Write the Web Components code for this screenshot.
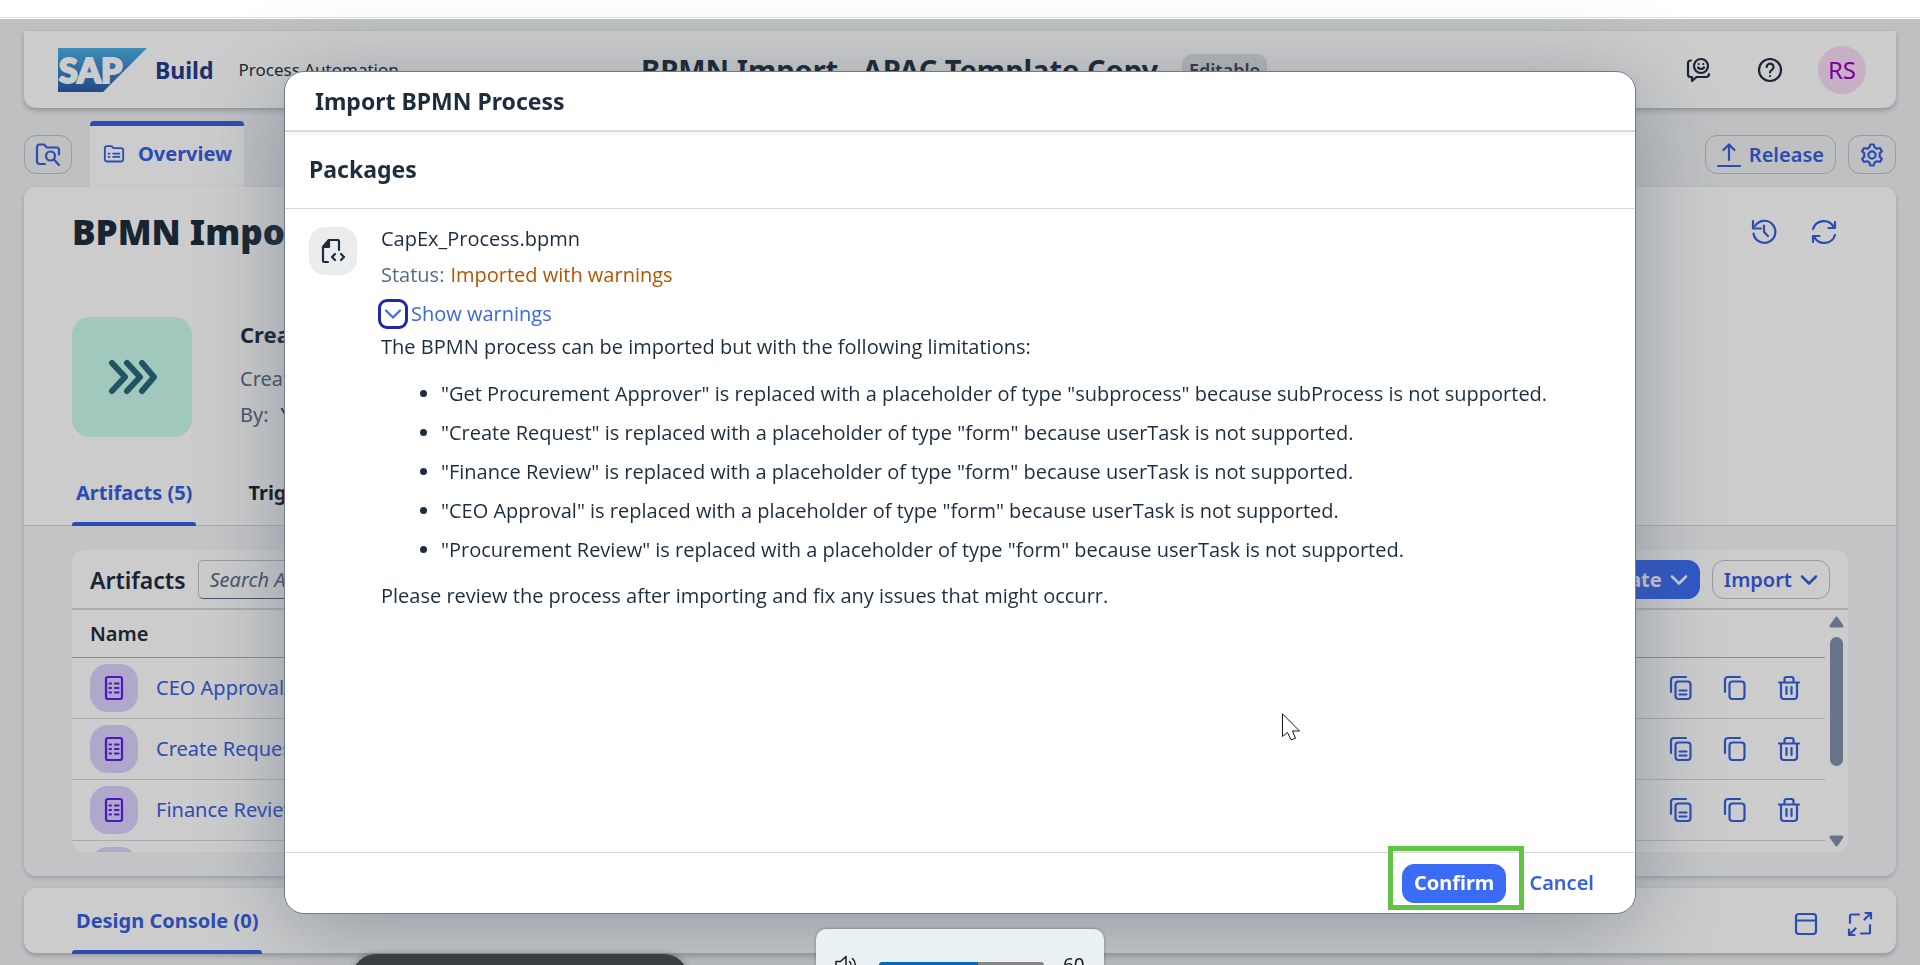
<!DOCTYPE html>
<html lang="en">
<head>
<meta charset="utf-8">
<title>BPMN Import - APAC Template Copy</title>
<style>
  :root {
    --ink: #1d2d3e; --label: #556b82; --blue: #3660e0; --line: #d9d9d9;
    --edge: #bcc3ca; --surface: #ffffff; --canvas: #eff1f3; --section: #f5f6f8;
  }
  html, body { margin: 0; height: 100%; overflow: hidden; }
  body { font: 20px/30px "Noto Sans", "Open Sans", sans-serif; color: var(--ink); background: #fff; }
</style>
</head>
<body>
<build-app></build-app>
<import-dialog heading="Import BPMN Process">
  <package-result file="CapEx_Process.bpmn" status="Imported with warnings">
    <span slot="intro">The BPMN process can be imported but with the following limitations:</span>
    <warning-item>"Get Procurement Approver" is replaced with a placeholder of type "subprocess" because subProcess is not supported.</warning-item>
    <warning-item>"Create Request" is replaced with a placeholder of type "form" because userTask is not supported.</warning-item>
    <warning-item>"Finance Review" is replaced with a placeholder of type "form" because userTask is not supported.</warning-item>
    <warning-item>"CEO Approval" is replaced with a placeholder of type "form" because userTask is not supported.</warning-item>
    <warning-item>"Procurement Review" is replaced with a placeholder of type "form" because userTask is not supported.</warning-item>
    <span slot="outro">Please review the process after importing and fix any issues that might occurr.</span>
  </package-result>
</import-dialog>
<dark-toast></dark-toast>
<volume-flyout level="60"></volume-flyout>
<mouse-pointer></mouse-pointer>

<script>
const define = (name, html, setup) => customElements.define(name, class extends HTMLElement {
  connectedCallback() {
    if (this.shadowRoot) return;
    const root = this.attachShadow({ mode: 'open' });
    root.innerHTML = typeof html === 'function' ? html(this) : html;
    if (setup) setup(this, root);
  }
});

const ICONS = {
  'folder-search': '<path d="M9 21H3.500A2.500 2.500 0 0 1 1 18.500V4a2.500 2.500 0 0 1 2.500-2.500H8l3 3h9.500A2.500 2.500 0 0 1 23 7v4.500"/><circle cx="14.500" cy="13" r="4.500"/><path d="M18 16.500l5 5.500"/>',
  'overview': '<path d="M1 5a2.500 2.500 0 0 1 2.500-2.500H9l2.500 2.500h9A2.500 2.500 0 0 1 23 7.500v11a2.500 2.500 0 0 1-2.500 2.500h-17A2.500 2.500 0 0 1 1 18.500z"/><path d="M5.500 11.500h1M5.500 15.500h1M11 11.500h7.500M11 15.500h7.500"/>',
  'feedback': '<path d="M5 2.500h-.500A2.500 2.500 0 0 0 2 5v11.500A2.500 2.500 0 0 0 4.500 19H6v4l4.500-4H20a3 3 0 0 0 3-3"/><circle cx="15" cy="8" r="7"/><path d="M12 9.500c1.500 2 4.500 2 6 0M12.700 6v.1M17.300 6v.1"/>',
  'help': '<circle cx="12" cy="12" r="11"/><path d="M8.700 9a3.400 3.400 0 1 1 5.200 2.900c-1.300.8-1.900 1.300-1.900 2.600M12 18v.1"/>',
  'upload': '<path d="M12 17V1.500M6.500 7L12 1.500 17.500 7M1 23h22"/>',
  'gear': '<circle cx="12" cy="12" r="3.600"/><path d="M10.200 1.500h3.600l.8 3 2.400 1.300 3-.8 1.900 3.200-2.200 2.200v3.200l2.200 2.200-1.900 3.200-3-.8-2.400 1.300-.8 3h-3.600l-.8-3L7 18.200l-3 .8-1.900-3.200 2.200-2.200v-3.200L2.100 8.200 4 5l3 .8 2.400-1.300z"/>',
  'history': '<path d="M1.500 13.500A11 11 0 1 0 3 6"/><path d="M1 1v7.500h8"/><path d="M12 5.500v6.500l4 4"/>',
  'refresh': '<path d="M1 9A11.300 11.300 0 0 1 22 7.500M23 15A11.300 11.300 0 0 1 2 16.500"/><path d="M23 2v6h-6.500M1 22v-6h6.500"/>',
  'form': '<rect x="4" y="1" width="16" height="22" rx="2"/><path d="M7.500 7.500h1.500M13 7.500h3.500M7.500 12h1.500M13 12h3.500M7.500 16.500h1.500M13 16.500h3.500"/>',
  'duplicate': '<rect x="6.500" y="5.500" width="15" height="17.500" rx="3"/><path d="M2 16V4a3 3 0 0 1 3-3h12M10.500 14.500h7M10.500 18.500h7"/>',
  'copy': '<rect x="6.500" y="5.500" width="15" height="17.500" rx="3"/><path d="M2 16V4a3 3 0 0 1 3-3h12"/>',
  'delete': '<path d="M2 6.500h20M4 6.500V20a3 3 0 0 0 3 3h10a3 3 0 0 0 3-3V6.500M7.500 6V3a2 2 0 0 1 2-2h5a2 2 0 0 1 2 2v3M9.500 11v7M14.500 11v7"/>',
  'chevron': '<path d="M5 8.500l7 7 7-7"/>',
  'process': '<path d="M2 5l6.500 7L2 19M9.500 5l6.500 7-6.500 7M17 5l6 7-6 7"/>',
  'panel': '<rect x="2" y="2" width="20" height="20" rx="3"/><path d="M2 8.500h20"/>',
  'expand': '<path d="M2 11V4a1.500 1.500 0 0 1 1.500-1.500H11M22 13v7a1.500 1.500 0 0 1-1.500 1.500H13M16.500 7.500L23 1M17.500 1H23v5.500M7.500 16.500L1 23M6.500 23H1v-5.500"/>',
  'bpmn-file': '<path d="M7 23H3a1 1 0 0 1-1-1V8l6-7h9a1 1 0 0 1 1 1v9"/><path d="M2 8h6V1z" fill="currentColor"/><path d="M14 15l-3 3 3 3M20 15l3 3-3 3"/>',
  'speaker': '<path d="M2 8.500h4.500L12 3.500v17l-5.500-5H2zM15.500 8.500a5 5 0 0 1 0 7M18.500 5.500a9 9 0 0 1 0 13"/>'
};

define('ui-icon', el => `
  <style>
    :host { display: inline-flex; flex: none; width: var(--icon, 24px); height: var(--icon, 24px); }
    svg { width: 100%; height: 100%; overflow: visible; fill: none; stroke: currentColor;
          stroke-width: var(--stroke, 2.2); stroke-linecap: round; stroke-linejoin: round; }
  </style>
  <svg viewBox="0 0 24 24" aria-hidden="true">${ICONS[el.getAttribute('name')] || ''}</svg>`);

define('ui-button', el => `
  <style>
    :host { display: inline-flex; flex: none; }
    button { display: flex; align-items: center; justify-content: center; gap: 8px; box-sizing: border-box;
      height: 39px; min-width: 48px; padding: 0 11px; border: 1px solid var(--edge); border-radius: 12px;
      background: transparent; color: var(--blue); font: 600 20px/30px "Noto Sans", "Open Sans", sans-serif; white-space: nowrap; }
    :host([kind="primary"]) button { background: #3b6cf6; border-color: #3b6cf6; color: #fff; font-weight: 700; }
    :host([kind="plain"]) button { border-color: transparent; padding: 0 10px; }
    :host([kind="icon"]) button { border: 0; min-width: 24px; padding: 0; }
    ::slotted(ui-icon[name="chevron"]) { margin: 0 -3px; --stroke: 2.5; }
  </style>
  <button type="button" aria-label="${el.getAttribute('label') || el.textContent.trim()}"><slot></slot></button>`);

define('ui-tab', `
  <style>
    :host { display: flex; }
    a { display: flex; align-items: center; box-sizing: border-box; padding: 0 4px; color: #131c28;
        font-weight: 700; text-decoration: none; white-space: nowrap; }
    .box { display: flex; flex-direction: column; }
    .box a { flex: 1; }
    .bar { height: 4px; border-radius: 3px 3px 0 0; }
    :host([selected]) a { color: var(--blue); }
    :host([selected]) .bar { background: var(--blue); }
  </style>
  <div class="box"><a href="#"><slot></slot></a><div class="bar"></div></div>`);

define('sap-logo', `
  <style>
    :host { display: block; width: 89px; height: 44px; }
    text { font: 900 34px Lato, "Noto Sans", sans-serif; fill: #fff; stroke: #fff; stroke-width: 2; }
  </style>
  <svg width="89" height="44" viewBox="0 0 89 44" role="img" aria-label="SAP">
    <defs><linearGradient id="g" x1="0" y1="0" x2="0" y2="1">
      <stop offset="0" stop-color="#4db1ea"/><stop offset="1" stop-color="#2b5cab"/></linearGradient></defs>
    <path d="M0 0H89L45 44H0z" fill="url(#g)"/><text x="1" y="35">SAP</text>
  </svg>`);

define('app-header', `
  <style>
    :host { display: grid; grid-template-columns: 1fr auto 1fr; align-items: center; box-sizing: border-box; height: 78px;
      padding: 0 30px 0 34px; background: var(--surface); border-radius: 0 0 12px 12px;
      border-bottom: 1px solid #b9bec5; box-shadow: 0 2px 5px rgba(85,107,130,.35); }
    .brand { display: flex; align-items: center; }
    .brand sap-logo { margin-right: 8px; }
    .brand b { font-size: 23px; color: #233b8a; margin-right: 25px; }
    .brand span { font-size: 17px; }
    .title { display: flex; align-items: center; gap: 24px; padding-right: 16px; }
    h1 { margin: 0; font-size: 29px; font-weight: 700; line-height: 40px; }
    .badge { padding: 1px 7px; border-radius: 10px; background: #dfe3e7; color: #3d444d; font-size: 18px; font-weight: 600; }
    .tools { display: flex; align-items: center; justify-content: flex-end; gap: 48px; }
    .tools ui-button { --blue: var(--ink); }
    .avatar { display: grid; place-items: center; width: 48px; height: 48px; margin-left: -12px; border-radius: 50%;
      background: #fbdcf6; color: #9a00c7; font-size: 24px; }
  </style>
  <div class="brand"><sap-logo></sap-logo><b>Build</b><span>Process Automation</span></div>
  <div class="title"><h1>BPMN Import - APAC Template Copy</h1><span class="badge">Editable</span></div>
  <div class="tools">
    <ui-button kind="icon" label="Feedback"><ui-icon name="feedback"></ui-icon></ui-button>
    <ui-button kind="icon" label="Help"><ui-icon name="help"></ui-icon></ui-button>
    <div class="avatar">RS</div>
  </div>`);

define('page-tabs', `
  <style>
    :host { display: flex; align-items: flex-start; gap: 12px; margin-top: 12px; }
    ui-button { margin-top: 14px; }
    a { display: flex; align-items: center; gap: 14px; box-sizing: border-box; height: 66px; margin: 0 auto 0 6px;
      padding: 0 12px 6px 14px; border-top: 5px solid var(--blue); border-radius: 4px 4px 0 0; background: var(--surface);
      color: var(--blue); font-weight: 700; text-decoration: none; }
    a ui-icon { --icon: 20px; }
  </style>
  <ui-button label="Browse files"><ui-icon name="folder-search"></ui-icon></ui-button>
  <a href="#"><ui-icon name="overview"></ui-icon>Overview</a>
  <ui-button><ui-icon name="upload"></ui-icon>Release</ui-button>
  <ui-button label="Settings"><ui-icon name="gear"></ui-icon></ui-button>`);

define('project-header', `
  <style>
    :host { display: block; padding: 20px 48px 0; background: var(--surface); border-bottom: 1px solid #d0d4d9;
      border-radius: 12px 12px 0 0; }
    .top, .info, .tabs { display: flex; }
    .top { align-items: center; height: 50px; gap: 36px; padding-right: 12px; }
    h2 { flex: 1; margin: 0; font-size: 35px; line-height: 50px; font-weight: 900; }
    .info { gap: 48px; margin-top: 60px; }
    .tile { display: grid; place-items: center; width: 120px; height: 120px; border-radius: 18px; background: #c9fbed; color: #296a7a;
      --icon: 48px; --stroke: 3; }
    h3 { margin: 2px 0 12px; font-size: 22px; line-height: 30px; font-weight: 700; }
    p { margin: 0; line-height: 36px; color: var(--label); }
    p span { margin-left: 12px; color: var(--ink); }
    .tabs { gap: 48px; height: 63px; margin: 26px 0 -1px; }
  </style>
  <div class="top"><h2>BPMN Import</h2>
    <ui-button kind="icon" label="History"><ui-icon name="history"></ui-icon></ui-button>
    <ui-button kind="icon" label="Refresh"><ui-icon name="refresh"></ui-icon></ui-button></div>
  <div class="info"><div class="tile"><ui-icon name="process"></ui-icon></div>
    <div><h3>Create Process</h3><p>Created on:</p><p>By:<span>You</span></p></div></div>
  <div class="tabs"><ui-tab selected>Artifacts (5)</ui-tab><ui-tab>Triggers</ui-tab></div>`);

const ARTIFACTS = ['CEO Approval', 'Create Request', 'Finance Review', 'Procurement Review'];
define('artifact-list', `
  <style>
    :host { display: flex; flex-direction: column; flex: 1; min-height: 0; overflow: hidden; background: var(--surface); border-radius: 12px; }
    .bar { display: flex; align-items: center; gap: 12px; flex: none; box-sizing: border-box; height: 60px; padding: 1px 18px 0; border-bottom: 2px solid var(--line); }
    h4 { margin: 0; font-size: 23px; font-weight: 600; }
    input { box-sizing: border-box; width: 320px; height: 39px; margin-right: auto; padding: 0 11px; border: 1px solid var(--edge);
      border-bottom: 1px solid #556b82; border-radius: 5px; background: transparent; font: inherit; }
    input::placeholder { font-style: italic; color: var(--label); opacity: 1; }
    .body { display: flex; flex: 1; min-height: 0; overflow: hidden; }
    .scroll { flex: 1; overflow: hidden; }
    table { width: 100%; border-collapse: separate; border-spacing: 0; }
    th { height: 47px; padding: 0 18px; text-align: left; font-weight: 600; border-bottom: 1px solid #a4aeba; }
    td { height: 60px; padding: 0 18px; border-bottom: 1px solid #d3d6d9; }
    .name { display: flex; align-items: center; gap: 18px; }
    .tile { display: grid; place-items: center; width: 48px; height: 48px; border-radius: 18px; background: #ddd2fe; color: #5d1ef0; }
    a { color: var(--blue); text-decoration: none; }
    .acts { display: flex; justify-content: flex-end; gap: 30px; padding-right: 6px; }
    .rail { display: flex; flex-direction: column; align-items: center; box-sizing: border-box; width: 23px; padding: 6px 0 5px; gap: 9px; }
    .rail svg { flex: none; fill: #8292ad; stroke: #8292ad; stroke-width: 3; stroke-linejoin: round; }
    .track { flex: 1; display: flex; }
    .thumb { width: 13px; height: 68%; border-radius: 7px; background: #8292ad; }
  </style>
  <div class="bar"><h4>Artifacts</h4><input type="search" aria-label="Search Artifacts" placeholder="Search Artifacts">
    <ui-button kind="primary">Create<ui-icon name="chevron"></ui-icon></ui-button>
    <ui-button>Import<ui-icon name="chevron"></ui-icon></ui-button></div>
  <div class="body"><div class="scroll"><table>
    <thead><tr><th>Name</th><th></th></tr></thead>
    <tbody>${ARTIFACTS.map(n => `<tr><td><div class="name"><span class="tile"><ui-icon name="form"></ui-icon></span><a href="#">${n}</a></div></td>
      <td><div class="acts"><ui-button kind="icon" label="Duplicate"><ui-icon name="duplicate"></ui-icon></ui-button>
      <ui-button kind="icon" label="Copy"><ui-icon name="copy"></ui-icon></ui-button>
      <ui-button kind="icon" label="Delete"><ui-icon name="delete"></ui-icon></ui-button></div></td></tr>`).join('')}</tbody>
  </table></div>
  <div class="rail"><svg width="15" height="12"><path d="M7.500 2L13 10H2z"/></svg>
    <div class="track"><div class="thumb"></div></div>
    <svg width="15" height="12"><path d="M2 2h11l-5.500 8z"/></svg></div></div>`);

define('design-console', `
  <style>
    :host { display: flex; flex: none; justify-content: space-between; height: 66px; box-sizing: border-box; padding: 0 24px 0 48px;
      background: var(--surface); border-radius: 12px; box-shadow: 0 2px 4px rgba(85,107,130,.35), inset 0 -1px #c5cad0; }
    ui-tab { padding-top: 3px; }
    .tools { display: flex; align-items: center; gap: 30px; padding-top: 6px; }
  </style>
  <ui-tab selected>Design Console (0)</ui-tab>
  <div class="tools"><ui-button kind="icon" label="Dock"><ui-icon name="panel"></ui-icon></ui-button>
    <ui-button kind="icon" label="Expand"><ui-icon name="expand"></ui-icon></ui-button></div>`);

define('build-app', `
  <style>
    :host { display: flex; flex-direction: column; height: 100vh; }
    .strip { flex: none; height: 17px; border-bottom: 1px solid #dedfe0; margin-bottom: 1px; background: #fff; }
    .shell { display: flex; flex-direction: column; flex: 1; min-height: 0; box-sizing: border-box; padding: 12px 24px 11px; background: var(--canvas); }
    app-header, page-tabs { flex: none; }
    main { display: flex; flex-direction: column; flex: 1; min-height: 0; margin-bottom: 12px; background: var(--section);
      border-radius: 12px; box-shadow: 0 2px 4px rgba(85,107,130,.3); }
    .area { display: flex; flex: 1; min-height: 0; padding: 24px 48px; }
  </style>
  <div class="strip"></div>
  <div class="shell"><app-header></app-header><page-tabs></page-tabs>
    <main><project-header></project-header><div class="area"><artifact-list></artifact-list></div></main>
    <design-console></design-console></div>`);

define('warning-item', `
  <style>
    :host { display: list-item; list-style: disc; line-height: 39px; }
  </style><slot></slot>`, el => { el.setAttribute('role', 'listitem'); });

define('package-result', el => `
  <style>
    :host { display: flex; gap: 24px; padding: 12px 24px; font-family: "Open Sans", "Noto Sans", sans-serif; }
    .tile { display: grid; place-items: center; flex: none; width: 48px; height: 48px; margin-top: 6px; border-radius: 16px; background: #eaecee; --icon: 24px; }
    .line { line-height: 36px; }
    .line span { color: var(--label); margin-right: 6px; }
    .line em { font-style: normal; color: #b25400; }
    .toggle { display: flex; align-items: center; gap: 3px; margin: 6px 0 3px -3px; }
    button { display: grid; place-items: center; box-sizing: border-box; width: 30px; height: 30px; padding: 0;
      border: 3px solid #2029a8; border-radius: 9px; background: #fff; color: #3b6cf6; --icon: 24px; }
    label { color: #3b66e8; }
    .list { margin: 12px 0; padding-left: 60px; }
  </style>
  <div class="tile"><ui-icon name="bpmn-file"></ui-icon></div>
  <div>
    <div class="line">${el.getAttribute('file')}</div>
    <div class="line"><span>Status:</span><em>${el.getAttribute('status')}</em></div>
    <div class="toggle"><button type="button" id="t" aria-expanded="true"><ui-icon name="chevron"></ui-icon></button><label for="t">Show warnings</label></div>
    <slot name="intro"></slot>
    <div class="list" role="list"><slot></slot></div>
    <slot name="outro"></slot>
  </div>`);

define('import-dialog', el => `
  <style>
    :host { position: fixed; inset: 19px 0 0; display: flex; align-items: center; justify-content: center; background: rgba(0,0,0,.2); }
    section { display: flex; flex-direction: column; box-sizing: border-box; width: min(1352px, 90vw); height: calc(100% - 103px);
      background: #fff; border: 1px solid #727c8c; border-radius: 20px; box-shadow: 0 16px 90px rgba(70,88,110,.45); }
    h2, h3 { margin: 0; font-weight: 700; font-size: 23px; line-height: 30px; }
    header { padding: 14px 30px; border-bottom: 2px solid var(--line); box-shadow: 0 2px 6px rgba(0,0,0,.06); }
    .sub { padding: 22px 24px 24px; border-bottom: 1px solid var(--line); }
    .content { flex: 1; min-height: 0; }
    footer { display: flex; justify-content: flex-end; align-items: flex-start; gap: 12px; height: 50px; padding: 11px 30px 0; box-sizing: content-box; height: 49px; border-top: 1px solid var(--line); }
    .marked { position: relative; display: flex; }
    .marked::after { content: ""; position: absolute; inset: -18px -18px -7px -14px; border: 5px solid #62c446; pointer-events: none; }
  </style>
  <section role="dialog" aria-label="${el.getAttribute('heading')}">
    <header><h2>${el.getAttribute('heading')}</h2></header>
    <div class="sub"><h3>Packages</h3></div>
    <div class="content"><slot></slot></div>
    <footer><div class="marked"><ui-button kind="primary">Confirm</ui-button></div><ui-button kind="plain">Cancel</ui-button></footer>
  </section>`);

define('dark-toast', `
  <style>
    :host { position: fixed; left: 352px; bottom: -40px; width: 336px; height: 51px; border-radius: 24px;
      background: linear-gradient(#3b4142, #303438); box-shadow: 0 0 6px rgba(0,0,0,.3); }
  </style>`);

define('volume-flyout', el => `
  <style>
    :host { position: fixed; left: 50%; margin-left: -144px; bottom: -36px; display: flex; align-items: center; box-sizing: border-box;
      width: 288px; height: 72px; padding: 0 18px; border-radius: 10px; background: #eaf1f4; color: #1b1b1b;
      box-shadow: 0 0 3px rgba(0,0,0,.4); --icon: 24px; --stroke: 1.500; }
    input { appearance: none; width: 165px; height: 6px; margin: 0 19px 0 21px; border-radius: 3px;
      background: linear-gradient(90deg, #0067c7 60%, #868686 60%); }
    input::-webkit-slider-thumb { appearance: none; width: 0; height: 0; }
    output { font-size: 19px; }
  </style>
  <ui-icon name="speaker"></ui-icon>
  <input type="range" aria-label="Volume" min="0" max="100" value="${el.getAttribute('level')}">
  <output>${el.getAttribute('level')}</output>`);

define('mouse-pointer', `
  <style>
    :host { position: fixed; left: 1282px; top: 713px; width: 19px; height: 28px; pointer-events: none; }
  </style>
  <svg width="19" height="28" viewBox="0 0 19 28" fill="#fff" stroke="#14141e" stroke-width="1"><path d="M.5.8V23.500L5.500 19.500 9 26.800 13.500 25.300 10.500 18H17.500z"/></svg>`);
</script>
</body>
</html>
